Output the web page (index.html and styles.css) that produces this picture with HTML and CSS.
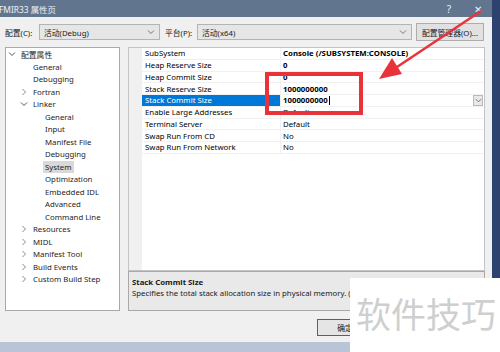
FILE: index.html
```html
<!DOCTYPE html>
<html lang="zh-CN">
<head>
    <meta charset="UTF-8">
    <meta name="viewport" content="width=device-width, initial-scale=1.0">
    <title>FMIR33 属性页</title>
    <link rel="stylesheet" href="styles.css">
</head>
<body>
    <div class="screen">
        <div class="desk">
            <div class="dialog">
                <div class="titlebar">
                    <span class="title">FMIR33 属性页</span>
                    <span class="tb-btn">?</span>
                    <span class="tb-btn tb-close">✕</span>
                </div>

                <div class="toolbar">
                    <span class="label label-config">配置(C):</span>
                    <div class="combo combo-config">
                        <span class="combo-text">活动(Debug)</span>
                        <svg class="combo-arrow" width="8" height="8" viewBox="0 0 8 8"><polyline points="1,2.5 4,5.5 7,2.5" fill="none" stroke="#777" stroke-width="1"/></svg>
                    </div>
                    <span class="label label-platform">平台(P):</span>
                    <div class="combo combo-platform">
                        <span class="combo-text">活动(x64)</span>
                        <svg class="combo-arrow" width="8" height="8" viewBox="0 0 8 8"><polyline points="1,2.5 4,5.5 7,2.5" fill="none" stroke="#777" stroke-width="1"/></svg>
                    </div>
                    <button class="btn btn-manager">配置管理器(O)...</button>
                </div>

                <div class="main">
                    <div class="tree">
                        <div class="node lvl0"><svg class="chev" width="8" height="8" viewBox="0 0 8 8"><polyline points="1,2.5 4,5.5 7,2.5" fill="none" stroke="#555" stroke-width="1"/></svg><span>配置属性</span></div>
                        <div class="node lvl1"><i class="chev"></i><span>General</span></div>
                        <div class="node lvl1"><i class="chev"></i><span>Debugging</span></div>
                        <div class="node lvl1"><svg class="chev" width="8" height="8" viewBox="0 0 8 8"><polyline points="2.5,1 5.5,4 2.5,7" fill="none" stroke="#888" stroke-width="1"/></svg><span>Fortran</span></div>
                        <div class="node lvl1"><svg class="chev" width="8" height="8" viewBox="0 0 8 8"><polyline points="1,2.5 4,5.5 7,2.5" fill="none" stroke="#555" stroke-width="1"/></svg><span>Linker</span></div>
                        <div class="node lvl2"><i class="chev"></i><span>General</span></div>
                        <div class="node lvl2"><i class="chev"></i><span>Input</span></div>
                        <div class="node lvl2"><i class="chev"></i><span>Manifest File</span></div>
                        <div class="node lvl2"><i class="chev"></i><span>Debugging</span></div>
                        <div class="node lvl2"><i class="chev"></i><span class="selected">System</span></div>
                        <div class="node lvl2"><i class="chev"></i><span>Optimization</span></div>
                        <div class="node lvl2"><i class="chev"></i><span>Embedded IDL</span></div>
                        <div class="node lvl2"><i class="chev"></i><span>Advanced</span></div>
                        <div class="node lvl2"><i class="chev"></i><span>Command Line</span></div>
                        <div class="node lvl1"><svg class="chev" width="8" height="8" viewBox="0 0 8 8"><polyline points="2.5,1 5.5,4 2.5,7" fill="none" stroke="#888" stroke-width="1"/></svg><span>Resources</span></div>
                        <div class="node lvl1"><svg class="chev" width="8" height="8" viewBox="0 0 8 8"><polyline points="2.5,1 5.5,4 2.5,7" fill="none" stroke="#888" stroke-width="1"/></svg><span>MIDL</span></div>
                        <div class="node lvl1"><svg class="chev" width="8" height="8" viewBox="0 0 8 8"><polyline points="2.5,1 5.5,4 2.5,7" fill="none" stroke="#888" stroke-width="1"/></svg><span>Manifest Tool</span></div>
                        <div class="node lvl1"><svg class="chev" width="8" height="8" viewBox="0 0 8 8"><polyline points="2.5,1 5.5,4 2.5,7" fill="none" stroke="#888" stroke-width="1"/></svg><span>Build Events</span></div>
                        <div class="node lvl1"><svg class="chev" width="8" height="8" viewBox="0 0 8 8"><polyline points="2.5,1 5.5,4 2.5,7" fill="none" stroke="#888" stroke-width="1"/></svg><span>Custom Build Step</span></div>
                    </div>

                    <div class="right">
                        <div class="grid">
                            <div class="gutter"></div>
                            <div class="props">
                                <div class="prop"><span class="name">SubSystem</span><span class="value bold">Console (/SUBSYSTEM:CONSOLE)</span></div>
                                <div class="prop"><span class="name">Heap Reserve Size</span><span class="value bold">0</span></div>
                                <div class="prop"><span class="name">Heap Commit Size</span><span class="value bold">0</span></div>
                                <div class="prop"><span class="name">Stack Reserve Size</span><span class="value bold">1000000000</span></div>
                                <div class="prop active"><span class="name">Stack Commit Size</span><span class="value bold"><span class="edit">1000000000</span><span class="caret"></span><span class="drop"><svg width="7" height="7" viewBox="0 0 8 8"><polyline points="1,2.5 4,5.5 7,2.5" fill="none" stroke="#666" stroke-width="1"/></svg></span></span></div>
                                <div class="prop"><span class="name">Enable Large Addresses</span><span class="value">Default</span></div>
                                <div class="prop"><span class="name">Terminal Server</span><span class="value">Default</span></div>
                                <div class="prop"><span class="name">Swap Run From CD</span><span class="value">No</span></div>
                                <div class="prop"><span class="name">Swap Run From Network</span><span class="value">No</span></div>
                            </div>
                        </div>
                        <div class="desc">
                            <div class="desc-title">Stack Commit Size</div>
                            <div class="desc-text">Specifies the total stack allocation size in physical memory. (</div>
                        </div>
                    </div>
                </div>

                <div class="footer">
                    <button class="btn btn-ok">确定</button>
                </div>
            </div>
            <div class="edge"></div>
        </div>
        <div class="strip"></div>

        <div class="mark-box"></div>
        <svg class="mark-arrow" width="500" height="352" viewBox="0 0 500 352">
            <line x1="481" y1="11" x2="394" y2="69" stroke="#e8333b" stroke-width="2.5"/>
            <polygon points="379,79 402,74 392,58" fill="#e8333b"/>
        </svg>
        <div class="watermark">软件技巧</div>
    </div>
</body>
</html>
```

FILE: styles.css
```css
* {
    box-sizing: border-box;
}
body {
    margin: 0;
    font-family: "Noto Sans", "Noto Sans CJK SC", sans-serif;
    font-size: 7.8px;
    color: #1a1a1a;
}
.screen {
    width: 500px;
    height: 352px;
    position: relative;
    overflow: hidden;
    display: flex;
    flex-direction: column;
    background: #2c3f66;
}
.desk {
    display: flex;
    height: 342px;
}
.dialog {
    width: 492px;
    flex: none;
    background: #f0f0f0;
    display: flex;
    flex-direction: column;
}
.edge {
    flex: 1;
    background: #2e4270;
}
.strip {
    height: 10px;
    background: #b9c5d7;
}
.titlebar {
    height: 17px;
    background: #62758f;
    color: #eef1f5;
    display: flex;
    align-items: center;
    font-size: 8.4px;
}
.title {
    flex: 1;
    margin-left: -1px;
}
.tb-btn {
    width: 28px;
    text-align: center;
    font-size: 10px;
}
.tb-close {
    width: 29px;
}
.toolbar {
    height: 30px;
    display: flex;
    align-items: center;
    padding: 0 7px 0 5px;
}
.label-config {
    width: 34px;
}
.label-platform {
    width: 32px;
    margin-left: 5px;
}
.combo {
    height: 16px;
    display: flex;
    align-items: center;
    justify-content: space-between;
    padding: 0 4px 0 4px;
    background: #e6e6e6;
    border: 1px solid #b4b4b4;
}
.combo-config {
    width: 121px;
}
.combo-platform {
    width: 215px;
}
.btn {
    font-family: "Noto Sans", "Noto Sans CJK SC", sans-serif;
    font-size: 7.8px;
    color: #1a1a1a;
    background: #e1e1e1;
    border: 1px solid #adadad;
    padding: 0;
    margin: 0;
    white-space: nowrap;
}
.btn-manager {
    width: 68px;
    height: 18px;
    margin-left: 4px;
}
.main {
    height: 264px;
    display: flex;
    gap: 8px;
    padding: 0 7px 0 5px;
}
.tree {
    width: 115px;
    flex: none;
    background: #fff;
    border: 1px solid #a9a9a9;
    color: #1e1e1e;
}
.node {
    height: 12.5px;
    display: flex;
    align-items: center;
    white-space: nowrap;
}
.node.lvl0 {
    padding-left: 2px;
}
.node.lvl1 {
    padding-left: 14px;
}
.node.lvl2 {
    padding-left: 26px;
}
.chev {
    display: block;
    width: 8px;
    height: 8px;
    flex: none;
    margin-right: 5px;
}
.node .selected {
    background: #d9d9d9;
    margin-left: -2px;
    padding: 0 2px;
    line-height: 12px;
}
.right {
    flex: 1;
    min-width: 0;
    display: flex;
    flex-direction: column;
}
.grid {
    height: 224px;
    display: flex;
    background: #fff;
    border: 1px solid #c4c4c4;
}
.gutter {
    width: 13px;
    background: #f0f0f0;
}
.props {
    flex: 1;
}
.prop {
    height: 11.75px;
    display: grid;
    grid-template-columns: 139px 1fr;
    color: #000;
}
.prop .name,
.prop .value {
    display: flex;
    align-items: center;
    border-bottom: 1px solid #f1f1f1;
    white-space: nowrap;
    overflow: hidden;
}
.prop .name {
    padding-left: 3px;
    border-right: 1px solid #f1f1f1;
}
.prop .value {
    padding-left: 2px;
}
.bold {
    font-weight: bold;
}
.prop.active .name {
    background: #0078d7;
    color: #fff;
}
.caret {
    width: 1px;
    height: 9px;
    background: #000;
    margin-left: 1px;
}
.drop {
    margin-left: auto;
    margin-right: 1px;
    width: 10px;
    height: 11px;
    display: flex;
    align-items: center;
    justify-content: center;
    background: #e8e8e8;
    border: 1px solid #b9b9b9;
}
.desc {
    height: 40px;
    background: #e9e9e9;
    border: 1px solid #a9a9a9;
    padding: 5px 3px 0 3px;
    line-height: 11px;
    white-space: nowrap;
    overflow: hidden;
}
.desc-title {
    font-weight: bold;
}
.footer {
    height: 31px;
    display: flex;
    align-items: flex-start;
    padding: 8px 0 0 317px;
}
.footer .btn {
    width: 56px;
    height: 17px;
    flex: none;
}
.footer .btn-ok {
    border-color: #0078d7;
    background: #e5e5e5;
}
.mark-box {
    position: absolute;
    left: 265px;
    top: 72px;
    width: 98px;
    height: 43px;
    border: 4px solid #e8333b;
}
.mark-arrow {
    position: absolute;
    left: 0;
    top: 0;
}
.watermark {
    position: absolute;
    left: 350px;
    top: 278px;
    width: 150px;
    height: 74px;
    background: #fff;
    color: #cfcfcf;
    font-family: "Noto Sans CJK SC", sans-serif;
    font-size: 35px;
    line-height: 1;
    padding: 17px 0 0 6px;
    white-space: nowrap;
}
```
